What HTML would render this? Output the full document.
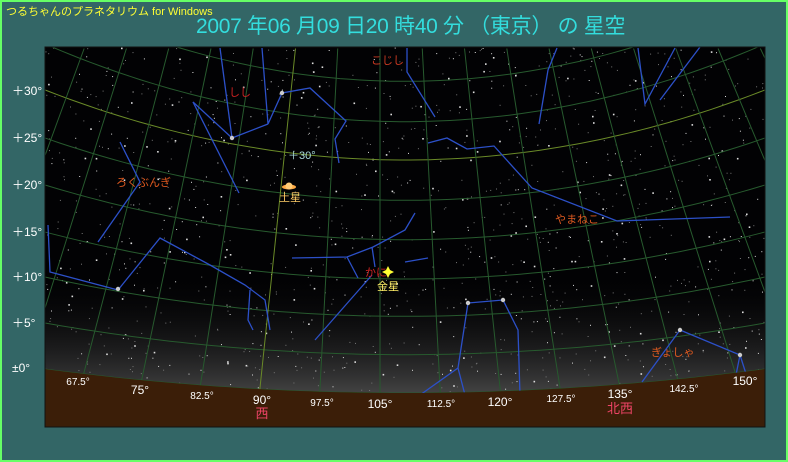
<!DOCTYPE html>
<html><head><meta charset="utf-8"><style>
html,body{margin:0;padding:0}
body{width:788px;height:462px;overflow:hidden;background:#336666;position:relative;font-family:"Liberation Sans","Noto Sans CJK JP",sans-serif}
#frame{position:absolute;left:0;top:0;width:784px;height:458px;border:2px solid #66ff66}
.t{position:absolute;white-space:nowrap}
</style></head><body>
<div id="frame"></div>
<div class="t" style="left:6px;top:3px;font-size:11px;color:#ffff33">つるちゃんのプラネタリウム for Windows</div>
<div class="t" style="left:196px;top:10px;font-size:21px;color:#33dddd;letter-spacing:-0.3px">2007 年06 月09 日20 時40 分 （東京） の 星空</div>
<svg id="sv" width="788" height="462" style="position:absolute;left:0;top:0" xmlns="http://www.w3.org/2000/svg">
<defs>
<linearGradient id="haze" x1="0" y1="0" x2="0" y2="1">
<stop offset="0" stop-color="#000" stop-opacity="0"/>
<stop offset="1" stop-color="#4a4a4a" stop-opacity="1"/>
</linearGradient>
<clipPath id="sky"><rect x="45" y="47" width="720" height="380"/></clipPath>
</defs>
<rect x="45" y="47" width="720" height="380" fill="#020204"/>
<g clip-path="url(#sky)">
<rect x="45" y="270" width="720" height="130" fill="url(#haze)"/>
<g id="stars"></g>
<g id="grid" fill="none" stroke-width="1"></g>
<g id="con" fill="none" stroke="#2c50c8" stroke-width="1.3"></g>
<path id="ground" fill="#3b1e08"/>
</g>
<rect x="45" y="47" width="720" height="380" fill="none" stroke="#111" stroke-width="1"/>
<g font-family="Liberation Sans, Noto Sans CJK JP, sans-serif">
<g fill="#fff" font-size="12">
<text x="12" y="95">＋30°</text><text x="12" y="142">＋25°</text><text x="12" y="189">＋20°</text>
<text x="12" y="236">＋15°</text><text x="12" y="281">＋10°</text><text x="12" y="327">＋5°</text>
<text x="12" y="372">±0°</text>
</g>
<g fill="#fff" font-size="10" text-anchor="middle">
<text x="78" y="385">67.5°</text><text x="202" y="399">82.5°</text><text x="322" y="406">97.5°</text>
<text x="441" y="407">112.5°</text><text x="561" y="402">127.5°</text><text x="684" y="392">142.5°</text>
</g>
<g fill="#fff" font-size="12" text-anchor="middle">
<text x="140" y="394">75°</text><text x="262" y="404">90°</text><text x="380" y="408">105°</text>
<text x="500" y="406">120°</text><text x="620" y="398">135°</text><text x="745" y="385">150°</text>
</g>
<g fill="#ee4466" font-size="13" text-anchor="middle">
<text x="262" y="418">西</text><text x="620" y="413">北西</text>
</g>
<g font-size="11">
<text x="371" y="64" fill="#cc3a22">こじし</text>
<text x="229" y="96" fill="#cc2222">しし</text>
<text x="116" y="186" fill="#e05a20">ろくぶんぎ</text>
<text x="555" y="223" fill="#e05a20">やまねこ</text>
<text x="651" y="356" fill="#e05a20">ぎょしゃ</text>
<text x="365" y="276" fill="#cc2222">かに</text>
<text x="288" y="159" fill="#aadddd" font-size="11">＋30°</text>
<text x="279" y="201" fill="#ffcc66">土星</text>
<text x="377" y="290" fill="#ffee66">金星</text>
</g>
<ellipse cx="289" cy="187" rx="7" ry="2.5" fill="#ffaa44"/><circle cx="289" cy="186" r="3.5" fill="#ffcc77"/>
<path d="M388 266 L390 270 L394 272 L390 274 L388 278 L386 274 L382 272 L386 270Z" fill="#ffff33"/>
</g>
</svg>
<script>
(function(){
var ns="http://www.w3.org/2000/svg";
function el(p,t,a){var e=document.createElementNS(ns,t);for(var k in a)e.setAttribute(k,a[k]);p.appendChild(e);return e;}
var s=12345;function r(){s=(s*1103515245+12345)%2147483648;return s/2147483648;}
var st=document.getElementById('stars');
for(var i=0;i<1300;i++){var x=45+r()*720,y=47+r()*360,b=r();
el(st,'rect',{x:x.toFixed(1),y:y.toFixed(1),width:b>0.9?1.6:1,height:b>0.9?1.6:1,fill:b>0.6?'#ddd':'#777'});}
function yAlt(a,x){var yl={35:44,30:90,25:138,20:185,15:232,10:277,5:323,0:369,40:-4,45:-52}[a];var sag=24+a*46/30;var u=(x-405)/360;return yl+sag*(1-u*u);}
var g=document.getElementById('grid');
[0,5,10,15,20,25,30,35,40].forEach(function(a){var d='';for(var x=40;x<=770;x+=10){d+=(x==40?'M':'L')+x+' '+yAlt(a,x).toFixed(1);}
el(g,'path',{d:d,stroke:a==30?'#6a8a28':'#275a2e'});});
var zx=380,zy=-760;
for(var A=37.5;A<=172.5;A+=7.5){var xb=380+(A-105)*8.05,yb=395;
el(g,'path',{d:'M'+xb+' '+yb+' L'+(xb+(zx-xb)*0.3)+' '+(yb+(zy-yb)*0.3),stroke:A==90?'#6a8a28':'#275a2e'});}
var L=[[[220,48],[232,138]],[[262,48],[268,124],[282,93],[310,88],[346,121],[335,139],[339,163]],[[232,138],[268,124]],[[193,102],[232,138]],[[193,102],[239,193]],
[[120,142],[140,182],[98,242]],[[48,225],[50,272],[118,290],[160,238],[210,265],[245,285],[265,300],[270,330]],[[250,290],[248,320],[253,330]],
[[292,258],[347,257],[373,247],[405,230],[415,213]],[[347,257],[358,278]],[[372,247],[375,267]],[[372,275],[315,340]],
[[407,48],[407,72],[435,117]],[[557,48],[548,70],[539,124]],[[638,48],[645,104],[675,48]],
[[428,143],[447,138],[467,149],[494,146],[532,188],[617,221],[730,217]],[[405,262],[428,258]],
[[468,303],[503,300],[518,330],[520,395]],[[468,303],[458,368],[465,395]],[[458,368],[420,395]],
[[680,330],[740,355],[735,380]],[[740,355],[748,380]],[[680,330],[642,382]],[[700,47],[660,100]]];
var c=document.getElementById('con');
L.forEach(function(p){el(c,'polyline',{points:p.map(function(q){return q.join(',')}).join(' ')});});
[[232,138],[282,93],[118,289],[468,303],[503,300],[740,355],[680,330]].forEach(function(q){el(st.parentNode,'circle',{cx:q[0],cy:q[1],r:2.2,fill:'#ccc'});});
var d='M40 '+yAlt(0,40);for(var x=40;x<=770;x+=10)d+=' L'+x+' '+yAlt(0,x).toFixed(1);d+=' L770 430 L40 430Z';
document.getElementById('ground').setAttribute('d',d);
})();
</script>
</body></html>
